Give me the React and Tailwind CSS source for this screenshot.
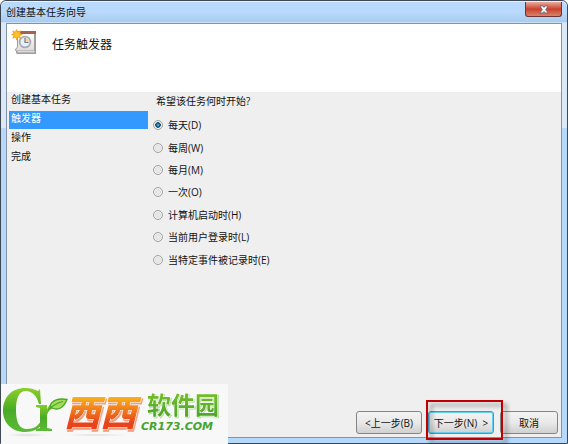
import React from "react";

const steps = ["创建基本任务", "触发器", "操作", "完成"];
const triggers = [
  "每天(D)",
  "每周(W)",
  "每月(M)",
  "一次(O)",
  "计算机启动时(H)",
  "当前用户登录时(L)",
  "当特定事件被记录时(E)",
];

function TaskIcon() {
  return (
    <svg viewBox="0 0 26 26" className="h-[26px] w-[26px] shrink-0 overflow-visible" aria-hidden="true">
      <defs>
        <linearGradient id="paper" x1="0" y1="0" x2="0" y2="1">
          <stop offset="0" stopColor="#fff" />
          <stop offset="1" stopColor="#dcdcdc" />
        </linearGradient>
        <radialGradient id="sun">
          <stop offset="0" stopColor="#ffcf3a" />
          <stop offset="1" stopColor="#f5960a" />
        </radialGradient>
      </defs>
      <path d="M5 2H24V25H5L4 24V22L2.500 21L5 18Z" fill="#a19d9d" />
      <path d="M6 5H22V21.500H3.500L6 18Z" fill="url(#paper)" />
      <path d="M5.500 22.800H22.500" stroke="#f6f6f6" strokeWidth="1" />
      <path d="M5 2H24V5H5Z" fill="#a3634f" />
      <circle cx="13" cy="13" r="6.300" fill="#b3aea8" />
      <circle cx="13" cy="13" r="5" fill="#e9f0fa" stroke="#97a3b8" strokeWidth="0.800" />
      <path d="M13 9V13.500H16.500V10Z" fill="#f6d694" />
      <path d="M13 9V13.500H16.500" stroke="#6f7d98" strokeWidth="1.200" fill="none" />
      <path d="M4.500 0L5.900 2.600L9 1.500L8 4.200L11 5.500L8 6.800L9 9.800L5.900 8.500L4.500 11.500L3.200 8.500L0.300 9.800L1.300 6.800L-1 5.500L1.300 4.200L0.300 1.500L3.200 2.600Z" fill="url(#sun)" />
    </svg>
  );
}

function SiteLogo() {
  return (
    <svg viewBox="0 0 227 60" className="block h-[60px] w-[227px] overflow-visible" role="img" aria-label="CR173.COM">
      <defs>
        <linearGradient id="green" x1="0" y1="0" x2="0" y2="1">
          <stop offset="0" stopColor="#8ccf2c" />
          <stop offset="0.500" stopColor="#48ab26" />
          <stop offset="1" stopColor="#5cbb38" />
        </linearGradient>
        <linearGradient id="orange" x1="0" y1="0" x2="0" y2="1">
          <stop offset="0.250" stopColor="#f9b21c" />
          <stop offset="0.750" stopColor="#e8431c" />
        </linearGradient>
        <linearGradient id="lime" x1="0" y1="0" x2="0" y2="1">
          <stop offset="0" stopColor="#86c52c" />
          <stop offset="1" stopColor="#43a02b" />
        </linearGradient>
        <radialGradient id="haze">
          <stop offset="0" stopColor="#dedede" />
          <stop offset="1" stopColor="#f8f8f8" />
        </radialGradient>
      </defs>
      <ellipse cx="26" cy="51" rx="21" ry="2" fill="url(#haze)" />
      <ellipse cx="96" cy="51" rx="32" ry="1.500" fill="url(#haze)" />
      <path d="M39 5L40 20H38C36 12 31 7 25 7C18 7 15 14 15 26C15 38 18 45 26 45C33 45 37 42 40 37L42 39C38 45 32 48 24 48C11 48 2 39 2 27C2 13 11 4 24 4C29 4 33 5 37 7Z" fill="url(#green)" />
      <path d="M35 21H46V26C47 22 49 20 53 20L51 25C48 26 46 29 46 33V44L51 45V47H35V45L39 44V24L35 23Z" fill="url(#green)" />
      <path d="M49 22C51 16 58 14 66 15.500C63 23 58 27 51 24Z" fill="#a5dc5c" stroke="#48a826" strokeWidth="1.300" />
      <path d="M47 26C51 22 56 19 62 17.500" fill="none" stroke="#48a826" strokeWidth="1.200" />
      <text x="63" y="42" fontSize="36" fontStyle="italic" stroke="#fff" strokeWidth="1" className="font-['Noto_Sans_CJK_SC',sans-serif] font-black [paint-order:stroke] drop-shadow-[1px_2px_0px_#f2a07c]" fill="url(#orange)">西西</text>
      <text x="146" y="30" fontSize="24" stroke="#fff" strokeWidth="1" className="font-['Noto_Sans_CJK_SC',sans-serif] font-bold [paint-order:stroke] drop-shadow-[1px_1px_0px_#b5dda0]" fill="url(#lime)">软件园</text>
      <text x="140" y="46" fontSize="11" fontStyle="italic" className="font-['DejaVu_Sans',sans-serif] font-bold" fill="#43a52b">CR173.COM</text>
    </svg>
  );
}

const buttonBase =
  "h-[23px] rounded-[3px] border text-center leading-[14px] bg-linear-to-b from-[#f3f3f3] via-[#e9e9e9] to-[#d0d0d0]";

export default function App() {
  return (
    <div className="relative flex h-screen flex-col rounded-t-md border border-[#3f4753] bg-linear-to-b from-[#dbe8f7] from-[127px] to-[#b5d8fb] to-[127px] px-[5px] pb-[5px] font-['Open_Sans','Noto_Sans_CJK_SC',sans-serif] text-[10px] text-[#111]">
      <header className="-mx-[5px] flex h-[22px] shrink-0 items-center justify-between rounded-t-md border-t border-b border-t-[#e6f2ff] border-b-[#c9e0f6] bg-linear-to-b from-[#b9dafd] from-50% to-[#a9cbee] px-[5px]">
        <h1 className="leading-[14px]">创建基本任务向导</h1>
        <button aria-label="关闭" className="flex h-[15px] w-[37px] items-center justify-center self-start rounded-b-[3px] border border-t-0 border-[#6c3434] bg-linear-to-b from-[#e7a99d] via-[#c9402c] to-[#d98268]">
          <svg viewBox="0 0 10 9" className="h-[9px] w-[10px]">
            <path d="M1 1H4L5 2.500L6 1H9L6.700 4.500L9 8H6L5 6.500L4 8H1L3.300 4.500Z" fill="#fff" stroke="#5d5261" strokeWidth="0.700" />
          </svg>
        </button>
      </header>
      <main className="flex min-h-0 flex-1 flex-col border border-[#8494a6] bg-[#efefef]">
        <div className="flex h-[68px] shrink-0 items-start gap-[14px] bg-white pt-[5px] pl-[5px]">
          <TaskIcon />
          <h2 className="pt-[7px] text-[12px] leading-[18px]">任务触发器</h2>
        </div>
        <div className="flex flex-1">
          <ol className="flex w-[141px] flex-col gap-px pl-[2px]">
            {steps.map((s, i) => (
              <li key={s} className={i === 1 ? "h-[18px] bg-[#3399ff] pl-[2px] leading-[14px] text-white" : "h-[18px] pl-[2px] leading-[14px]"}>{s}</li>
            ))}
          </ol>
          <fieldset className="flex-1 pl-[5px]">
            <legend className="pt-[2px] pl-[3px] leading-[14px]">希望该任务何时开始?</legend>
            <div className="mt-[6px] flex h-[157px] flex-col">
              {triggers.map((t, i) => (
                <label key={t} className="flex flex-1 items-center gap-[5px] leading-[14px]">
                  <input type="radio" name="trigger" defaultChecked={i === 0} className="h-[10px] w-[10px] appearance-none rounded-full border border-[#a0a1a1] bg-[radial-gradient(circle,#e8e8e8_30%,#c5c5c5_100%)] shadow-[inset_0_0_0_1px_#f4f4f4] checked:bg-[radial-gradient(circle,#5cc8ee_0,#12507a_35%,#174a6b_45%,#d8dcde_55%)]" />
                  {t}
                </label>
              ))}
            </div>
          </fieldset>
        </div>
        <footer className="flex h-[26px] shrink-0 items-start justify-end gap-[6px] pr-[3px]">
          <button className={buttonBase + " w-[66px] border-[#858585]"}>&lt;上一步(B)</button>
          <div className="relative z-10">
            <button className={buttonBase + " w-[66px] border-[#3c9cc4] ring-1 ring-[#64cdf0] ring-inset"}>下一步(N)&nbsp; &gt;</button>
            <span className="pointer-events-none absolute -top-[11px] -left-[2px] h-[40px] w-[77px] border-2 border-[#c00000] drop-shadow-[4px_4px_2px_rgba(0,0,0,0.4)]" />
          </div>
          <button className={buttonBase + " w-[58px] border-[#858585]"}>取消</button>
        </footer>
      </main>
      <div className="absolute -bottom-px left-0 bg-[#f8f8f8]">
        <SiteLogo />
      </div>
    </div>
  );
}
